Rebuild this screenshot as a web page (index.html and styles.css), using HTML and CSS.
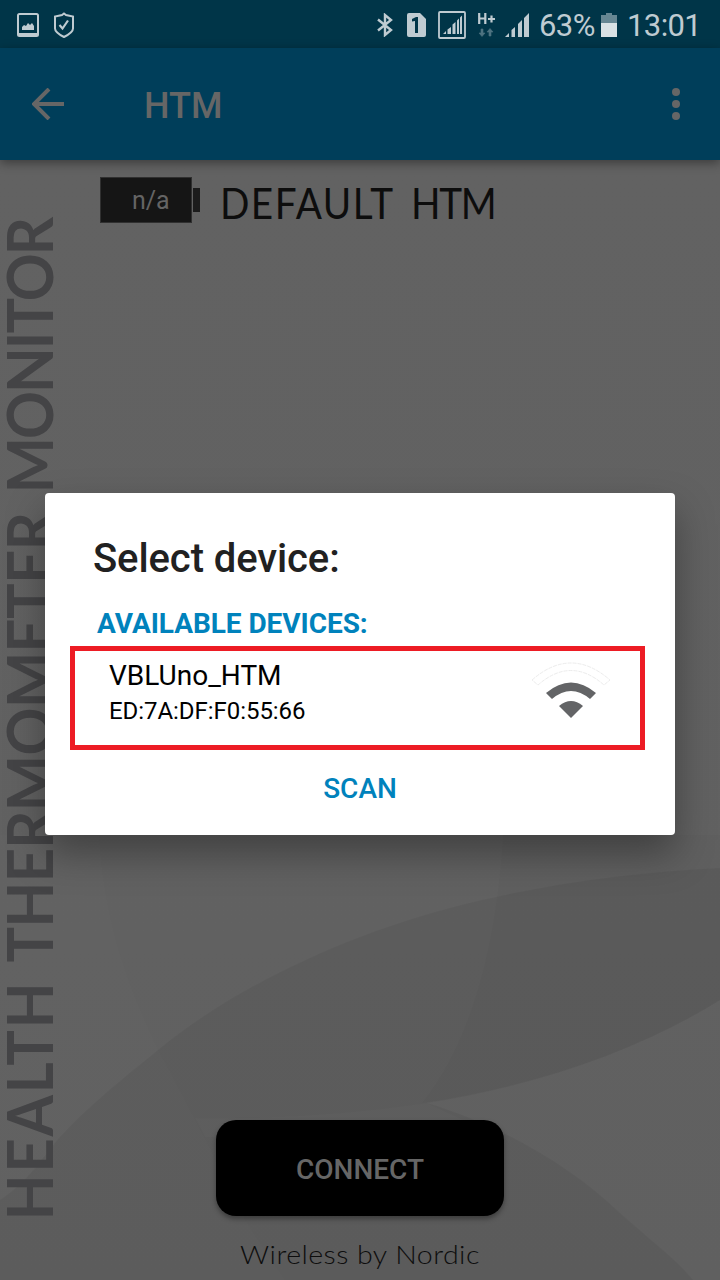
FILE: index.html
```html
<!DOCTYPE html>
<html lang="en">
<head>
<meta charset="utf-8">
<title>HTM</title>
<link rel="stylesheet" href="styles.css">
</head>
<body>
<div class="screen">
  <header class="status">
    <div class="status-left">
      <svg width="22" height="24" viewBox="0 0 22 24"><rect x="1" y="1" width="20" height="22" rx="1.5" fill="none" stroke="#bfcbd1" stroke-width="2"/><path d="M1 20h20v3H1zM5 17v-3l2-2 2 1 2-3 2 2 2-2 2 3v4z" fill="#bfcbd1"/></svg>
      <svg width="20" height="26" viewBox="0 0 20 26"><path d="M10 1.500L12 3l7 1.500v12c0 3-4 6-9 8.500-5-2.500-9-5.500-9-8.500v-12L8 3z" fill="none" stroke="#bfcbd1" stroke-width="2"/><path d="M5.500 13l3 3.500 5.500-8" fill="none" stroke="#bfcbd1" stroke-width="2.200"/></svg>
    </div>
    <div class="status-right">
      <svg class="i-bt" width="16" height="24" viewBox="0 0 16 24"><path d="M1 6.500l13 10.500-6 5V2l6 5L1 17.500" fill="none" stroke="#bfcbd1" stroke-width="2.400"/></svg>
      <svg class="i-sim" width="19" height="24" viewBox="0 0 19 24"><path d="M2 0h11l6 6v16a2 2 0 0 1-2 2H2a2 2 0 0 1-2-2V2a2 2 0 0 1 2-2z" fill="#bfcbd1"/><path d="M5 8.500V6l4-2h2v16H8V8z" fill="#003548"/></svg>
      <svg class="i-roam" width="28" height="28" viewBox="0 0 28 28"><rect x="1" y="1" width="26" height="26" rx="1" fill="none" stroke="#bfcbd1" stroke-width="1.800"/><path d="M5 23l3-3v3zM9.500 23v-4.500L13 16v7zM14.500 23v-9.500l3-2.500V23zM19 23V9.500L21 7.500V23zM22 23V6.500L24 4.500V23z" fill="#bfcbd1"/></svg>
      <svg class="i-hp" width="17" height="24" viewBox="0 0 17 24"><path d="M1.200 0v11M7.300 0v11M1 5.500h6M10 6h7M13.500 2.500v7" fill="none" stroke="#bfcbd1" stroke-width="2.200"/><path d="M3 16h2v4h2l-3 3.500L1 20h2zM11 23v-4H9l3-3.500 3 3.500h-2v4z" fill="#4d7280" stroke="#4d7280" stroke-width=".6"/></svg>
      <svg class="i-sig" width="24" height="24" viewBox="0 0 24 24"><path d="M0 24l4-4v4zM6.500 24v-7l3.500-3v10zM13 24V11l4-4v17zM19 24V5l5-5v24z" fill="#bfcbd1"/></svg>
      <span class="pct">63%</span>
      <svg class="i-bat" width="16" height="24" viewBox="0 0 16 24"><path d="M0 2h5V0h6v2h5v8H0z" fill="#668692"/><path d="M0 10h16v14H0z" fill="#d9e1e4"/></svg>
      <span class="clock">13:01</span>
    </div>
  </header>
  <nav class="bar">
    <svg class="back" width="32" height="32" viewBox="0 0 32 32"><path d="M32 16H3M17 1L2 16l15 15" fill="none" stroke="#666" stroke-width="4"/></svg>
    <h1 class="title">HTM</h1>
    <svg class="more" width="8" height="32" viewBox="0 0 8 32"><circle cx="4" cy="4" r="4" fill="#666"/><circle cx="4" cy="16" r="4" fill="#666"/><circle cx="4" cy="28" r="4" fill="#666"/></svg>
  </nav>
  <main class="content">
    <svg class="swirl" width="720" height="1120" viewBox="0 160 720 1120">
      <path d="M0 1200C30 1180 40 1160 60 1137C90 1105 115 1085 158 1050C230 990 350 930 482 900C560 882 640 872 720 868V1000C640 1050 540 1085 427 1103C500 1125 570 1165 620 1213C650 1240 675 1258 693 1280H0z" fill="#000" fill-opacity=".045"/>
      <path d="M99 835C104 920 125 980 158 1050C180 1090 200 1130 211 1150C230 1200 260 1245 285 1280H0V835z" fill="#fff" fill-opacity=".012"/>
      <path d="M503 835C498 920 480 1030 422 1103C540 1085 640 1050 720 1000V835z" fill="#000" fill-opacity=".015"/>
      <path d="M195 1118Q310 1120 427 1103L500 1137H205z" fill="#fff" fill-opacity=".015"/>
    </svg>
    <aside class="side"><div class="side-text"><span class="w1">HEALTH</span> <span class="w2">THERMOMETER</span> <span class="w3">MONITOR</span></div></aside>
    <div class="body">
      <div class="device-row">
        <div class="battery"><span class="cell">n/a</span><i class="nub"></i></div>
        <h2 class="name">DEFAULT <span class="name-end">HTM</span></h2>
      </div>
    </div>
    <footer class="foot">
      <button class="connect">CONNECT</button>
      <p class="credit">Wireless by Nordic</p>
    </footer>
  </main>
  <section class="dialog">
    <h2 class="dialog-title">Select device:</h2>
    <h3 class="group">AVAILABLE DEVICES:</h3>
    <div class="item">
      <div class="item-text">
        <span class="item-name">VBLUno_HTM</span>
        <span class="item-mac">ED:7A:DF:F0:55:66</span>
      </div>
      <svg class="wifi" width="80" height="58" viewBox="0 0 80 58"><path d="M1 18Q40-16 79 18l-6 5Q40-6 7 23z" fill="none" stroke="#ececec" stroke-width="1" stroke-dasharray="4 1"/><path d="M15 31Q40 10 65 31l-6 6Q40 21 21 37z" fill="#636466"/><path d="M28 44Q40 34 52 44L40 56z" fill="#636466"/></svg>
    </div>
    <button class="scan">SCAN</button>
  </section>
</div>
</body>
</html>
```

FILE: styles.css
```css
* { box-sizing: border-box; margin: 0; padding: 0; }
body { width: 720px; height: 1280px; overflow: hidden; font-family: Roboto, sans-serif; }
svg { display: block; flex: none; }
button { border: 0; font-family: inherit; }
.screen { position: relative; width: 720px; height: 1280px; display: flex; flex-direction: column; background: #616161; }

.status { height: 48px; background: #003548; color: #bfcbd1; display: flex; justify-content: space-between; padding: 0 20px 0 17px; font-size: 31px; }
.status-left { display: flex; gap: 15px; align-items: center; padding-top: 2px; }
.status-right { display: flex; align-items: center; padding-top: 2px; }
.i-sim { margin-left: 14px; }
.i-roam { margin-left: 12px; }
.i-hp { margin-left: 12px; }
.i-sig { margin-left: 10px; }
.pct { width: 55px; margin-left: 10px; padding-top: 1px; white-space: nowrap; letter-spacing: -0.6px; }
.i-bat { margin-left: 7px; }
.clock { width: 73px; margin-left: 10px; padding-top: 1px; white-space: nowrap; letter-spacing: -0.6px; }

.bar { position: relative; z-index: 1; height: 112px; background: #003e5a; display: flex; align-items: center; padding: 0 40px 0 32px; box-shadow: 0 3px 10px rgba(0, 0, 0, .4); }
.title { flex: 1; margin-left: 80px; padding-top: 3px; font-size: 36px; font-weight: 500; color: #666; }

.content { position: relative; flex: 1; display: grid; grid-template-columns: 100px 1fr; grid-template-rows: 1fr 160px; background: linear-gradient(#626262, #616161 70%, #606060); }
.swirl { position: absolute; inset: 0; }
.side { position: relative; grid-row: 1 / 3; grid-column: 1; display: flex; align-items: flex-end; height: 1120px; padding-bottom: 59px; transform: scaleY(.93); transform-origin: 0 1056px; }
.side-text { writing-mode: vertical-rl; transform: rotate(180deg); font-family: Lato, sans-serif; font-weight: 700; font-size: 64px; line-height: 58px; white-space: nowrap; color: #444446; }
.w1 { letter-spacing: 2px; margin-bottom: 4px; }
.w2 { letter-spacing: -0.7px; margin-bottom: 5px; }
.w3 { letter-spacing: -2.2px; }
.body { position: relative; grid-column: 2; grid-row: 1; padding-top: 17px; }
.device-row { display: flex; align-items: flex-start; }
.battery { display: flex; align-items: center; width: 100px; }
.cell { width: 92px; height: 46px; background: #151515; border: 1px solid #303030; color: #646464; font-size: 25px; line-height: 46px; padding-left: 31px; }
.nub { width: 7px; height: 24px; margin-left: 1px; background: #1c1c1c; }
.name { margin-left: 20px; font-family: Lato, sans-serif; font-weight: 400; font-size: 43px; line-height: 51px; letter-spacing: 1.6px; word-spacing: 7px; transform: scaleX(.9); transform-origin: 0 0; color: #0d0d0d; white-space: nowrap; }
.name-end { letter-spacing: -1.5px; }
.foot { position: relative; grid-column: 1 / 3; grid-row: 2; display: flex; flex-direction: column; align-items: center; }
.connect { width: 288px; height: 96px; border-radius: 20px; background: #000; color: #666; font-size: 28px; font-weight: 500; padding-top: 2px; box-shadow: 0 3px 5px rgba(0, 0, 0, .35); }
.credit { margin-top: 24px; font-family: Lato, sans-serif; font-weight: 300; font-size: 26px; line-height: 29px; letter-spacing: .4px; transform: scaleX(1.1); color: #0d0d0d; }

.dialog { position: absolute; z-index: 2; left: 45px; top: 493px; width: 630px; height: 342px; background: #fff; border-radius: 4px; display: flex; flex-direction: column; box-shadow: 0 18px 38px rgba(0, 0, 0, .34); }
.dialog-title { margin: 42px 0 0 48px; font-size: 40px; line-height: 48px; letter-spacing: -.1px; font-weight: 500; color: #212121; }
.group { margin: 24px 0 0 52px; font-size: 28px; line-height: 34px; letter-spacing: -.05px; font-weight: 700; color: #0082bc; }
.item { width: 575px; height: 104px; margin: 5px 0 0 25px; border: 5px solid #ed1c24; display: flex; justify-content: space-between; padding: 8px 29px 0 34px; color: #000; }
.item-text { display: flex; flex-direction: column; }
.item-name { font-size: 28px; line-height: 34px; }
.item-mac { font-size: 24px; line-height: 30px; margin-top: 3px; letter-spacing: -.05px; }
.wifi { margin-top: 3px; }
.scan { align-self: center; width: 120px; height: 48px; margin-top: 14px; background: none; color: #0082bc; font-size: 28px; font-weight: 500; }
```
